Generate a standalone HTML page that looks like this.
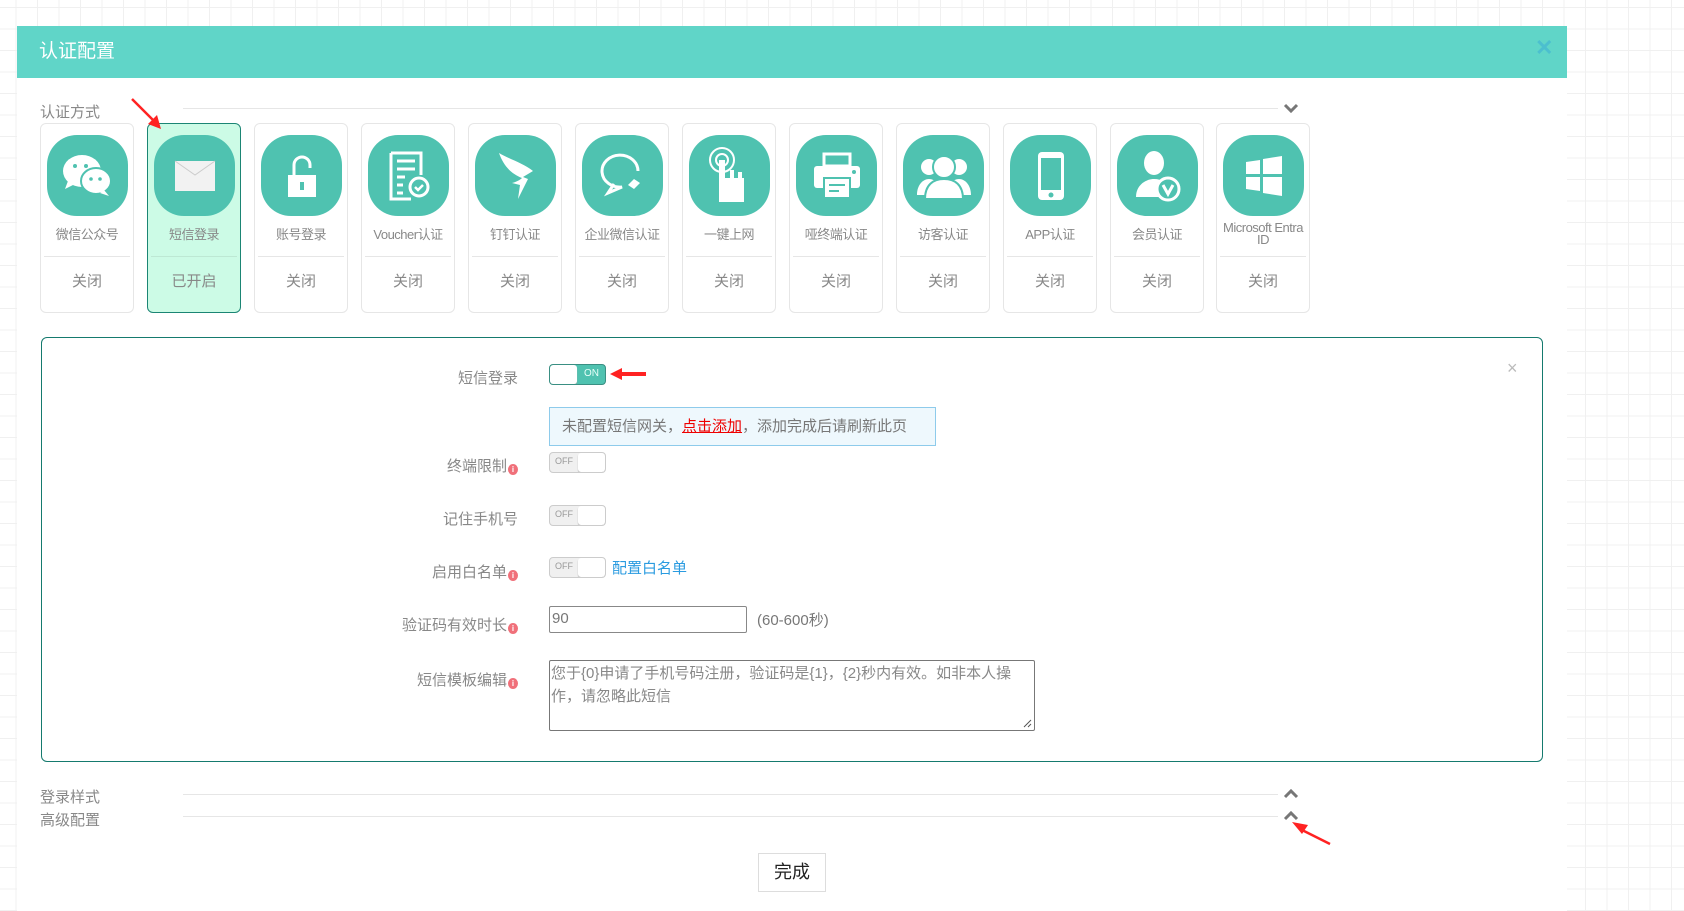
<!DOCTYPE html>
<html><head><meta charset="utf-8"><style>
*{box-sizing:border-box;margin:0;padding:0}
body{width:1684px;height:911px;overflow:hidden;position:relative;font-family:"Liberation Sans","Noto Sans CJK SC",sans-serif;
background-color:#fff;background-image:linear-gradient(#f0f0f0 1px,transparent 1px),linear-gradient(90deg,#f0f0f0 1px,transparent 1px);background-size:21.5px 21.5px;background-position:-6px 7px}
.abs{position:absolute}
.panel{left:17px;top:78px;width:1550px;height:833px;background:#fff}
.hdr{left:17px;top:26px;width:1550px;height:52px;background:#60d5c8;color:#fff;font-size:19px;line-height:52px;padding-left:22px}
.hx{left:1535px;top:35px;color:#4cbfcf;font-size:22px;font-weight:bold}
.sec{font-size:15px;color:#888}
.line{height:1px;background:#e6e6e6}
.chev{width:16px;height:10px}
.card{top:123px;width:94px;height:190px;border:1px solid #e6e6e6;border-radius:6px;background:#fff}
.card.on{background:#ccfbe6;border-color:#1b8574}
.ic{position:absolute;left:6px;top:11px;width:81px;height:81px;border-radius:30px;background:#4fc2b0;display:flex;align-items:center;justify-content:center}
.lb{position:absolute;left:0;width:92px;top:104px;text-align:center;font-size:13px;color:#888;letter-spacing:-.5px;line-height:13px}
.dv{position:absolute;left:3px;right:3px;top:132px;height:1px;background:#e6e6e6}
.st{position:absolute;left:0;width:92px;top:146px;text-align:center;font-size:15px;color:#888}
.box{left:41px;top:337px;width:1502px;height:425px;border:1px solid #157a6e;border-radius:6px}
.fl{width:200px;text-align:right;font-size:15px;color:#888;right:1166px}
.info{display:inline-block;width:10px;height:11px;border-radius:50%;background:#f0707a;vertical-align:-1px;margin-left:1px;color:#fff;font-size:8px;line-height:11px;text-align:center;font-weight:bold}
.tg{width:57px;height:21px;border:1px solid #ccc;border-radius:4px;background:#f0f0f0;overflow:hidden}
.tg .k{position:absolute;top:0;width:27px;height:19px;background:#fff;border-radius:3px;box-shadow:0 1px 1px #aaa}
.tg .t{position:absolute;top:3px;font-size:9px;color:#999}
</style></head><body>
<div class="abs panel"></div>
<div class="abs hdr">认证配置</div>
<div class="abs hx">✕</div>

<div class="abs sec" style="left:40px;top:101px">认证方式</div>
<div class="abs line" style="left:183px;top:108px;width:1095px"></div>
<svg class="abs chev" style="left:1283px;top:103px" viewBox="0 0 16 10"><path d="M2 2l6 6 6-6" stroke="#777" stroke-width="3" fill="none"/></svg>

<div class="abs card" style="left:40px"><div class="ic"><svg width="60" height="50" viewBox="0 0 60 50"><ellipse cx="24" cy="20" rx="19" ry="16" fill="#fff"/><path d="M10 30l-3 8 10-5z" fill="#fff"/><ellipse cx="38" cy="30" rx="15" ry="13" fill="#fff" stroke="#4fc2b0" stroke-width="2"/><path d="M46 39l5 6-9-3z" fill="#fff"/><circle cx="17" cy="15" r="2" fill="#4fc2b0"/><circle cx="28" cy="15" r="2" fill="#4fc2b0"/><circle cx="33" cy="28" r="1.8" fill="#4fc2b0"/><circle cx="42" cy="28" r="1.8" fill="#4fc2b0"/></svg></div><div class="lb">微信公众号</div><div class="dv"></div><div class="st">关闭</div></div>
<div class="abs card on" style="left:147px"><div class="ic"><svg width="44" height="34" viewBox="0 0 44 34"><rect x="2" y="2" width="40" height="30" fill="#f2f2f2"/><path d="M2 2l20 14 20-14" stroke="#ccc" fill="none"/></svg></div><div class="lb">短信登录</div><div class="dv" style="background:#bde8d4"></div><div class="st">已开启</div></div>
<div class="abs card" style="left:254px"><div class="ic"><svg width="34" height="46" viewBox="0 0 34 46"><path d="M9 22V12a8 8 0 0 1 16 0v3" stroke="#fff" stroke-width="3" fill="none"/><rect x="3" y="22" width="28" height="22" fill="#fff"/><rect x="15" y="29" width="4" height="8" fill="#4fc2b0"/></svg></div><div class="lb">账号登录</div><div class="dv"></div><div class="st">关闭</div></div>
<div class="abs card" style="left:361px"><div class="ic"><svg width="44" height="50" viewBox="0 0 44 50"><path d="M4 2h30v22M4 2v46h20" stroke="#fff" stroke-width="3" fill="none"/><path d="M10 10h18M10 18h18M10 26h8M10 34h6M10 42h6" stroke="#fff" stroke-width="3"/><circle cx="32" cy="36" r="9" fill="none" stroke="#fff" stroke-width="3"/><path d="M28 36l3 3 5-5" stroke="#fff" stroke-width="2.5" fill="none"/></svg></div><div class="lb">Voucher认证</div><div class="dv"></div><div class="st">关闭</div></div>
<div class="abs card" style="left:468px"><div class="ic"><svg width="40" height="50" viewBox="0 0 40 50"><path d="M3 2c10 6 24 10 34 18l-10 6 5 2-10 20 2-14-8-2c4-1 8-3 10-5C16 23 8 16 3 2z" fill="#fff"/></svg></div><div class="lb">钉钉认证</div><div class="dv"></div><div class="st">关闭</div></div>
<div class="abs card" style="left:575px"><div class="ic"><svg width="50" height="46" viewBox="0 0 50 46"><path d="M40 18A18 16 0 1 0 24 34L10 40l6-9" stroke="#fff" stroke-width="3" fill="none"/><path d="M36 26l6 4-6 6-6-4z" fill="#fff"/></svg></div><div class="lb">企业微信认证</div><div class="dv"></div><div class="st">关闭</div></div>
<div class="abs card" style="left:682px"><div class="ic"><svg width="44" height="60" viewBox="0 0 44 60"><circle cx="14" cy="14" r="12" stroke="#fff" stroke-width="2" fill="none"/><circle cx="14" cy="14" r="6" stroke="#fff" stroke-width="2" fill="none"/><path d="M11 14h6v18h5v-8h4v8h4v-6h4v6h2v24H11z" fill="#fff"/></svg></div><div class="lb">一键上网</div><div class="dv"></div><div class="st">关闭</div></div>
<div class="abs card" style="left:789px"><div class="ic"><svg width="50" height="48" viewBox="0 0 50 48"><rect x="12" y="2" width="26" height="12" fill="none" stroke="#fff" stroke-width="3"/><rect x="2" y="14" width="46" height="22" rx="3" fill="#fff"/><rect x="12" y="26" width="26" height="20" fill="#fff" stroke="#4fc2b0" stroke-width="2"/><path d="M17 33h16M17 39h10" stroke="#4fc2b0" stroke-width="2"/><circle cx="42" cy="20" r="2" fill="#4fc2b0"/></svg></div><div class="lb">哑终端认证</div><div class="dv"></div><div class="st">关闭</div></div>
<div class="abs card" style="left:896px"><div class="ic"><svg width="58" height="46" viewBox="0 0 58 46"><circle cx="14" cy="14" r="8" fill="#fff"/><circle cx="44" cy="14" r="8" fill="#fff"/><path d="M2 42c0-10 6-16 12-16s12 6 12 16zM32 42c0-10 6-16 12-16s12 6 12 16z" fill="#fff"/><circle cx="29" cy="14" r="11" fill="#fff" stroke="#4fc2b0" stroke-width="2"/><path d="M10 46c0-14 8-20 19-20s19 6 19 20z" fill="#fff" stroke="#4fc2b0" stroke-width="2"/></svg></div><div class="lb">访客认证</div><div class="dv"></div><div class="st">关闭</div></div>
<div class="abs card" style="left:1003px"><div class="ic"><svg width="30" height="52" viewBox="0 0 30 52"><rect x="2" y="2" width="26" height="48" rx="4" fill="#fff"/><rect x="5" y="8" width="20" height="32" fill="#4fc2b0"/><circle cx="15" cy="45" r="2.5" fill="#4fc2b0"/></svg></div><div class="lb">APP认证</div><div class="dv"></div><div class="st">关闭</div></div>
<div class="abs card" style="left:1110px"><div class="ic"><svg width="48" height="54" viewBox="0 0 48 54"><ellipse cx="20" cy="14" rx="10" ry="12" fill="#fff"/><path d="M2 48c0-12 10-18 18-18s14 4 16 8v10z" fill="#fff"/><circle cx="34" cy="40" r="11" fill="#4fc2b0" stroke="#fff" stroke-width="3"/><path d="M29 36l5 9 5-9" stroke="#fff" stroke-width="3" fill="none"/></svg></div><div class="lb">会员认证</div><div class="dv"></div><div class="st">关闭</div></div>
<div class="abs card" style="left:1216px"><div class="ic"><svg width="40" height="40" viewBox="0 0 40 40"><path d="M2 6l14-2v14H2zM19 3l19-3v18H19zM2 21h14v14L2 33zM19 21h19v19l-19-3z" fill="#fff"/></svg></div><div class="lb" style="top:98px;line-height:12px;font-size:13px">Microsoft Entra ID</div><div class="dv"></div><div class="st">关闭</div></div>

<svg class="abs" style="left:128px;top:95px" width="40" height="40" viewBox="0 0 40 40"><path d="M4 4L28 28" stroke="#f22" stroke-width="2.5"/><path d="M33 34L20 29l9-9z" fill="#f22"/></svg>

<div class="abs box"></div>
<div class="abs" style="left:1507px;top:358px;color:#bbb;font-size:18px">×</div>

<div class="abs fl" style="top:367px;right:1166px">短信登录</div>
<div class="abs tg" style="left:549px;top:364px;background:#4fc2b0;border-color:#3a8f83"><div class="t" style="left:34px;color:#e8fff9;font-size:10px">ON</div><div class="k" style="left:0"></div></div>
<svg class="abs" style="left:610px;top:367px" width="36" height="14" viewBox="0 0 36 14"><path d="M0 7l12-6v4h24v4H12v4z" fill="#f22"/></svg>

<div class="abs" style="left:549px;top:407px;width:387px;height:39px;background:#eef8fd;border:1px solid #8ecbeb;font-size:15px;color:#777;line-height:37px;padding-left:12px">未配置短信网关，<span style="color:#e00;text-decoration:underline">点击添加</span>，添加完成后请刷新此页</div>

<div class="abs fl" style="top:455px">终端限制<span class="info">i</span></div>
<div class="abs tg" style="left:549px;top:452px"><div class="t" style="left:5px">OFF</div><div class="k" style="left:28px"></div></div>

<div class="abs fl" style="top:508px">记住手机号</div>
<div class="abs tg" style="left:549px;top:505px"><div class="t" style="left:5px">OFF</div><div class="k" style="left:28px"></div></div>

<div class="abs fl" style="top:561px">启用白名单<span class="info">i</span></div>
<div class="abs tg" style="left:549px;top:557px"><div class="t" style="left:5px">OFF</div><div class="k" style="left:28px"></div></div>
<div class="abs" style="left:612px;top:557px;font-size:15px;color:#2a9be0">配置白名单</div>

<div class="abs fl" style="top:614px">验证码有效时长<span class="info">i</span></div>
<div class="abs" style="left:549px;top:606px;width:198px;height:27px;border:1px solid #888;border-radius:2px;font-size:15px;color:#777;padding:3px 2px">90</div>
<div class="abs" style="left:757px;top:609px;font-size:15px;color:#777">(60-600秒)</div>

<div class="abs fl" style="top:669px">短信模板编辑<span class="info">i</span></div>
<div class="abs" style="left:549px;top:660px;width:486px;height:71px;border:1px solid #777;border-radius:2px;font-size:15px;color:#888;padding:1px;line-height:23px">您于{0}申请了手机号码注册，验证码是{1}，{2}秒内有效。如非本人操作，请忽略此短信</div>
<svg class="abs" style="left:1022px;top:718px" width="10" height="10"><path d="M9 2L2 9M9 6L6 9" stroke="#555"/></svg>

<div class="abs sec" style="left:40px;top:786px">登录样式</div>
<div class="abs line" style="left:183px;top:794px;width:1095px"></div>
<svg class="abs chev" style="left:1283px;top:789px" viewBox="0 0 16 10"><path d="M2 8l6-6 6 6" stroke="#777" stroke-width="3" fill="none"/></svg>
<div class="abs sec" style="left:40px;top:809px">高级配置</div>
<div class="abs line" style="left:183px;top:816px;width:1095px"></div>
<svg class="abs chev" style="left:1283px;top:811px" viewBox="0 0 16 10"><path d="M2 8l6-6 6 6" stroke="#777" stroke-width="3" fill="none"/></svg>
<svg class="abs" style="left:1288px;top:818px" width="46" height="30" viewBox="0 0 46 30"><path d="M42 26L14 12" stroke="#f22" stroke-width="2.5"/><path d="M4 4l16 3-6 9z" fill="#f22"/></svg>

<div class="abs" style="left:758px;top:853px;width:68px;height:39px;border:1px solid #ddd;font-size:18px;color:#222;text-align:center;line-height:37px">完成</div>
</body></html>
